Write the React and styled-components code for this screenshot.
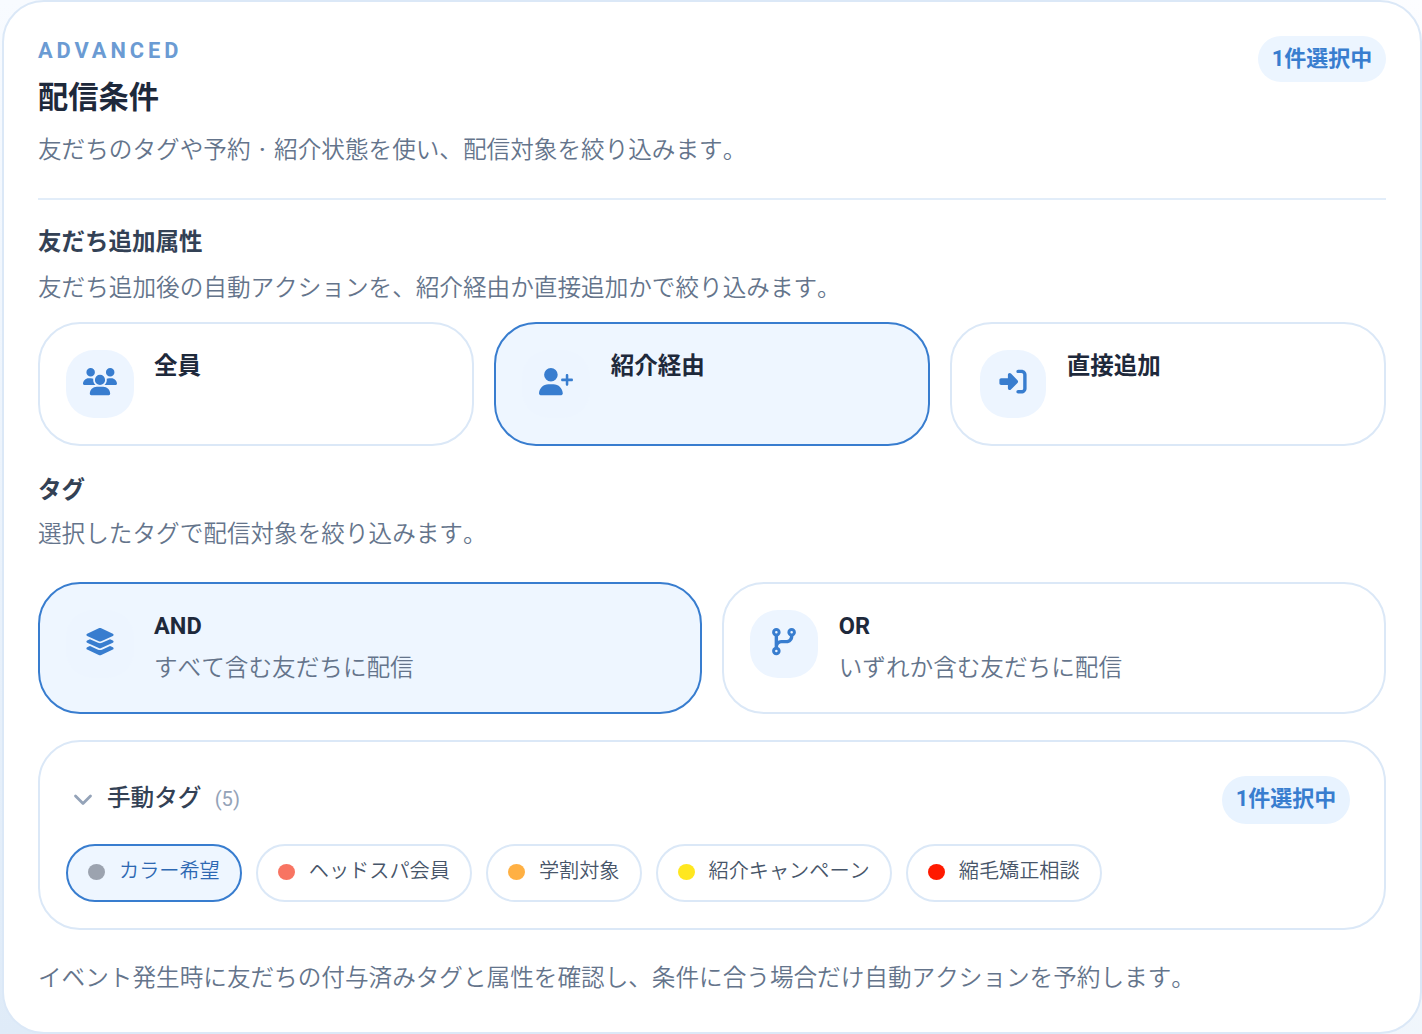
import React, { useState } from "react";
import styled, { createGlobalStyle } from "styled-components";
import {
  FaUsers,
  FaUserPlus,
  FaRightToBracket,
  FaLayerGroup,
  FaCodeBranch,
} from "react-icons/fa6";

const sources = [
  { id: "all", label: "全員", icon: FaUsers },
  { id: "referral", label: "紹介経由", icon: FaUserPlus },
  { id: "direct", label: "直接追加", icon: FaRightToBracket },
];

const modes = [
  { id: "and", label: "AND", note: "すべて含む友だちに配信", icon: FaLayerGroup },
  { id: "or", label: "OR", note: "いずれか含む友だちに配信", icon: FaCodeBranch },
];

const tags = [
  { name: "カラー希望", color: "#9ca3af" },
  { name: "ヘッドスパ会員", color: "#f87462" },
  { name: "学割対象", color: "#ffb043" },
  { name: "紹介キャンペーン", color: "#ffe71f" },
  { name: "縮毛矯正相談", color: "#ff1a00" },
];

const App = () => {
  const [source, setSource] = useState("referral");
  const [mode, setMode] = useState("and");
  const [selected, setSelected] = useState(["カラー希望"]);

  const toggleTag = (name) => {
    setSelected(
      selected.includes(name)
        ? selected.filter((tag) => tag !== name)
        : [...selected, name]
    );
  };

  return (
    <>
      <GlobalStyle />
      <Panel>
        <Header>
          <div>
            <Eyebrow>ADVANCED</Eyebrow>
            <Title>配信条件</Title>
            <Lead>
              友だちのタグや予約<Dot>·</Dot>紹介状態を使い、配信対象を絞り込みます。
            </Lead>
          </div>
          <Count>{selected.length}件選択中</Count>
        </Header>

        <SectionTitle>友だち追加属性</SectionTitle>
        <SectionNote>
          友だち追加後の自動アクションを、紹介経由か直接追加かで絞り込みます。
        </SectionNote>
        <Options $columns={3}>
          {sources.map(({ id, label, icon: Icon }) => (
            <Option
              key={id}
              $height={124}
              $active={source === id}
              onClick={() => setSource(id)}
            >
              <IconBox>
                <Icon />
              </IconBox>
              <OptionLabel>{label}</OptionLabel>
            </Option>
          ))}
        </Options>

        <TagSection>
          <SectionTitle>タグ</SectionTitle>
          <SectionNote>選択したタグで配信対象を絞り込みます。</SectionNote>
        </TagSection>
        <Options $columns={2}>
          {modes.map(({ id, label, note, icon: Icon }) => (
            <Option
              key={id}
              $height={132}
              $active={mode === id}
              onClick={() => setMode(id)}
            >
              <IconBox>
                <Icon />
              </IconBox>
              <div>
                <OptionLabel>{label}</OptionLabel>
                <OptionNote>{note}</OptionNote>
              </div>
            </Option>
          ))}
        </Options>

        <TagGroup>
          <GroupHeader>
            <Chevron viewBox="0 0 20 14">
              <path d="M2.5 3 L10 10.5 L17.5 3" />
            </Chevron>
            <GroupName>手動タグ</GroupName>
            <GroupSize>({tags.length})</GroupSize>
            <Count $inner>{selected.length}件選択中</Count>
          </GroupHeader>
          <Chips>
            {tags.map(({ name, color }) => (
              <Chip
                key={name}
                $active={selected.includes(name)}
                onClick={() => toggleTag(name)}
              >
                <Swatch $color={color} />
                <ChipText>{name}</ChipText>
              </Chip>
            ))}
          </Chips>
        </TagGroup>

        <Footnote>
          イベント発生時に友だちの付与済みタグと属性を確認し、条件に合う場合だけ自動アクションを予約します。
        </Footnote>
      </Panel>
    </>
  );
};

const GlobalStyle = createGlobalStyle`
  * {
    box-sizing: border-box;
  }

  body {
    margin: 0;
    background:
      linear-gradient(90deg, transparent 40%, rgba(255, 255, 255, 0.55)),
      linear-gradient(180deg, #f8fbff 0%, #dfebf8 100%);
    font-family: Roboto, "Noto Sans CJK JP", sans-serif;
    font-size: 23.61px;
    font-weight: 350;
    font-kerning: none;
    color: #64748b;
  }

  button {
    font: inherit;
    font-kerning: inherit;
    color: inherit;
    text-align: left;
    cursor: pointer;
  }
`;

const Panel = styled.section`
  height: 1034px;
  margin-left: 2px;
  padding: 34px;
  border: 2px solid #dbe8f7;
  border-radius: 42px;
  background: #fff;
  white-space: nowrap;
`;

const Header = styled.header`
  display: flex;
  justify-content: space-between;
  align-items: flex-start;
  height: 164px;
  border-bottom: 2px solid #e2edf9;
`;

const Eyebrow = styled.div`
  height: 30px;
  line-height: 30px;
  font-size: 21.8px;
  font-weight: 700;
  font-kerning: normal;
  letter-spacing: 3.95px;
  color: #6b9bd3;
`;

const Title = styled.h2`
  margin: 8px 0 0;
  height: 46px;
  line-height: 48px;
  font-size: 30.24px;
  font-weight: 700;
  color: #1e293b;
`;

const Lead = styled.p`
  margin: 10px 0 0;
  height: 40px;
  line-height: 40px;
`;

const Dot = styled.span`
  display: inline-block;
  width: 23.6px;
  text-align: center;
  font-weight: 500;
`;

const Count = styled.span`
  width: 128px;
  height: ${({ $inner }) => ($inner ? 48 : 46)}px;
  line-height: ${({ $inner }) => ($inner ? 46 : 45)}px;
  margin-left: auto;
  border-radius: 24px;
  background: ${({ $inner }) => ($inner ? "#e8f3ff" : "#ecf5ff")};
  text-align: center;
  font-size: 22px;
  font-weight: 700;
  color: #387dcf;
`;

const SectionTitle = styled.h3`
  margin: 0;
  padding-top: 24px;
  height: 62px;
  line-height: 36px;
  font-size: 23.52px;
  font-weight: 700;
  color: #334155;
`;

const SectionNote = styled.p`
  margin: 0;
  padding-top: 6px;
  height: 60px;
  line-height: 40px;
`;

const TagSection = styled.div`
  height: 136px;

  ${SectionTitle} {
    padding-top: 26px;
  }
`;

const Options = styled.div`
  display: grid;
  grid-template-columns: repeat(${({ $columns }) => $columns}, 1fr);
  gap: 20px;
`;

const Option = styled.button`
  display: flex;
  align-items: flex-start;
  gap: 20px;
  height: ${({ $height }) => $height}px;
  padding: 26px;
  border: 2px solid ${({ $active }) => ($active ? "#387dcf" : "#dbe8f7")};
  border-radius: 42px;
  background: ${({ $active }) => ($active ? "#eef6ff" : "#fff")};

  & + & {
    gap: 20.7px;
  }
`;

const IconBox = styled.span`
  display: flex;
  align-items: center;
  justify-content: center;
  flex: none;
  width: 68px;
  height: 68px;
  padding-bottom: 4px;
  border-radius: 28px;
  background: #edf5ff;
  color: #387dcf;

  svg {
    width: 34px;
    height: 27.2px;
  }

  ${Option}:nth-child(3) & {
    width: 66px;
    margin-left: 2px;
  }
`;

const OptionLabel = styled.div`
  height: 32px;
  line-height: 32px;
  font-size: 23.52px;
  font-weight: 700;
  font-kerning: normal;
  color: #1e293b;
`;

const OptionNote = styled.div`
  margin-top: 8px;
  height: 36px;
  line-height: 36px;
`;

const TagGroup = styled.div`
  height: 190px;
  margin-top: 26px;
  padding: 34px 26px 26px;
  border: 2px solid #dbe8f7;
  border-radius: 42px;
`;

const GroupHeader = styled.div`
  display: flex;
  align-items: center;
  height: 48px;
  padding: 0 8px 0 7px;
`;

const Chevron = styled.svg`
  width: 20px;
  height: 14px;
  fill: none;
  stroke: #94a3b8;
  stroke-width: 2.8;
  stroke-linecap: round;
  stroke-linejoin: round;
`;

const GroupName = styled.span`
  margin-left: 14px;
  line-height: 44px;
  padding-bottom: 4px;
  font-weight: 500;
  color: #334155;
`;

const GroupSize = styled.span`
  margin-left: 13.2px;
  padding-bottom: 2px;
  font-size: 20.16px;
  font-weight: 400;
  color: #94a3b8;
`;

const Chips = styled.div`
  display: flex;
  gap: 14px;
  margin-top: 20px;
`;

const Chip = styled.button`
  display: flex;
  align-items: center;
  gap: 14px;
  height: 58px;
  padding: 0 20px;
  border: 2px solid ${({ $active }) => ($active ? "#387dcf" : "#dbe8f7")};
  border-radius: 30px;
  background: ${({ $active }) => ($active ? "#eef6ff" : "#fff")};
  color: ${({ $active }) => ($active ? "#2d68b2" : "#475569")};
  font-size: 20.17px;
`;

const Swatch = styled.span`
  width: 17px;
  height: 16px;
  margin-bottom: 2px;
  border-radius: 50%;
  background: ${({ $color }) => $color};
`;

const ChipText = styled.span`
  line-height: 30px;
  padding-bottom: 4px;
`;

const Footnote = styled.p`
  margin: 28px 0 0;
  line-height: 40px;
`;

export default App;
